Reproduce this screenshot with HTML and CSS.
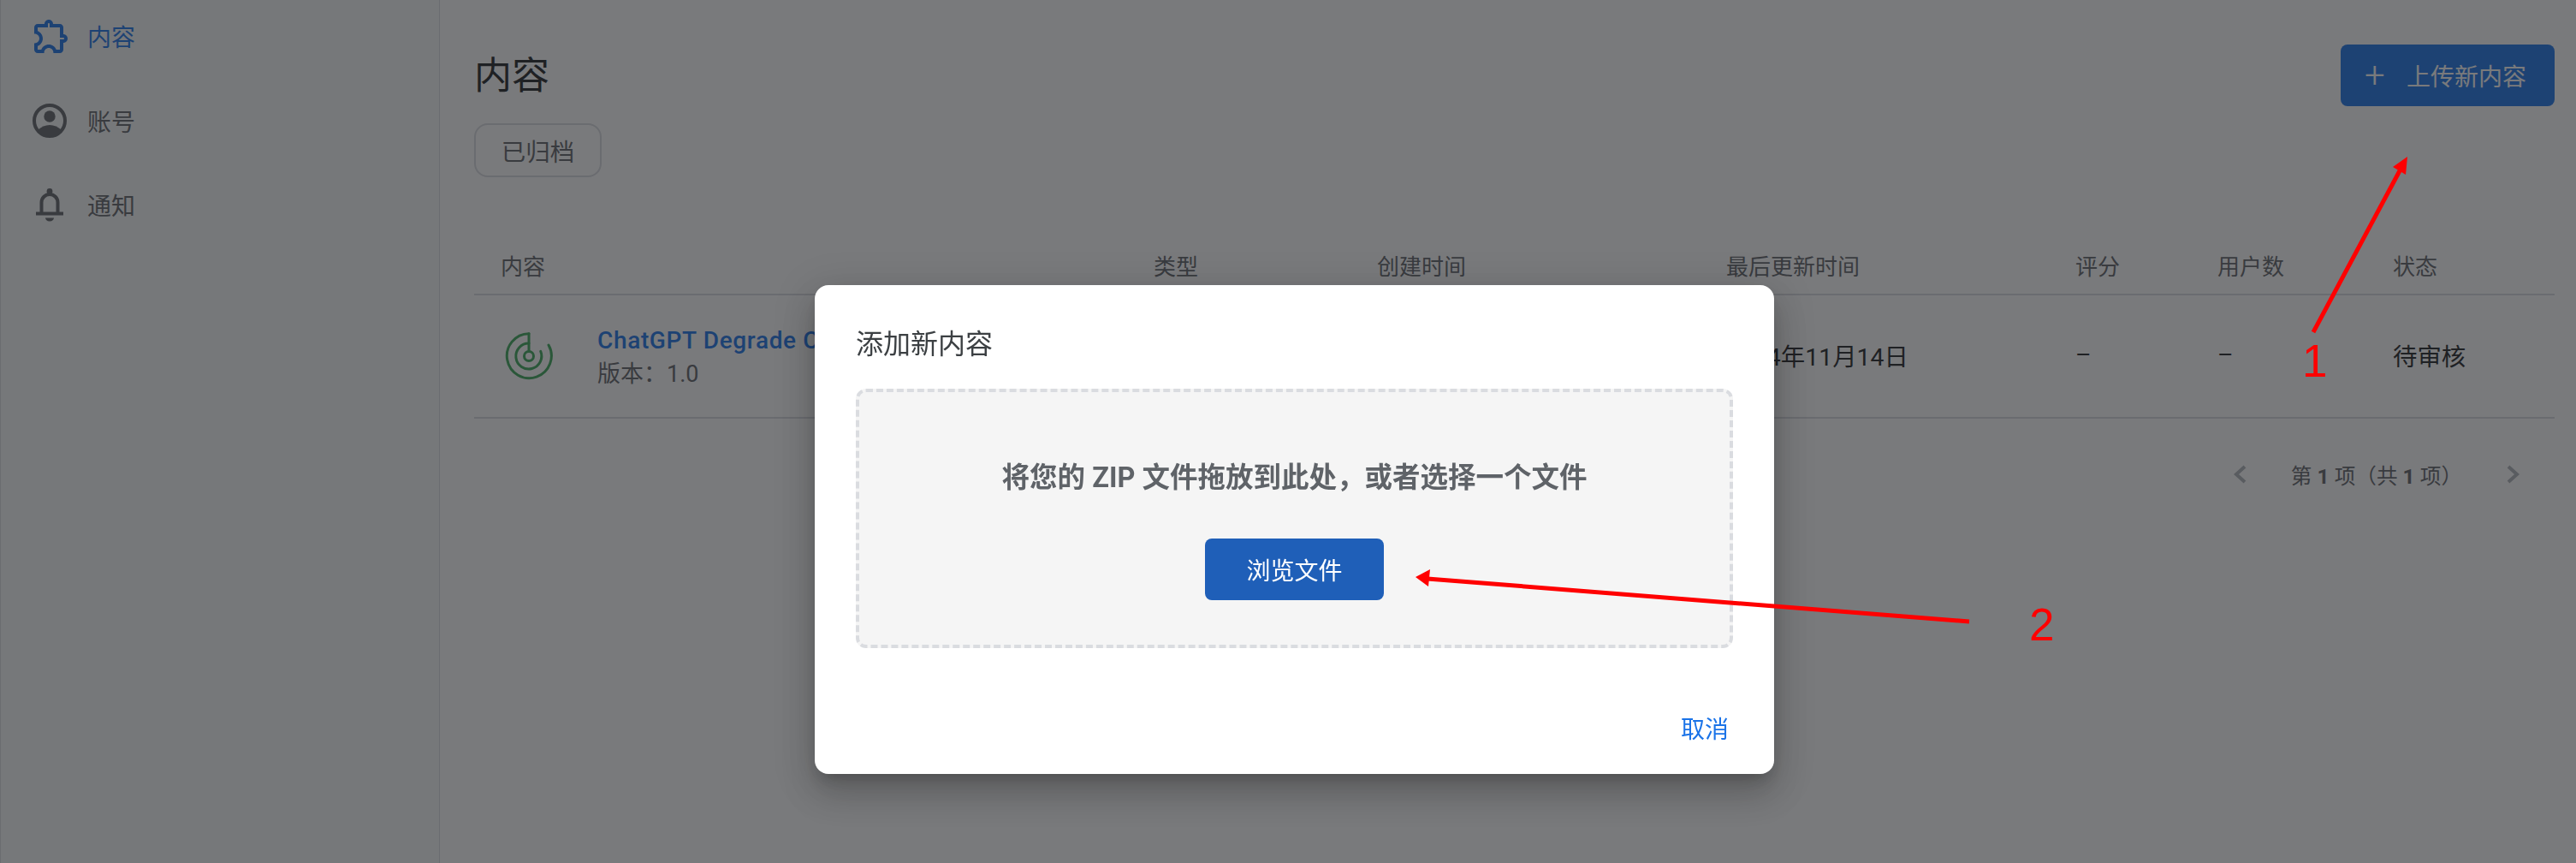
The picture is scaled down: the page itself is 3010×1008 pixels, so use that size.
FILE: index.html
```html
<!DOCTYPE html>
<html lang="zh-CN">
<head>
    <meta charset="UTF-8">
    <meta name="viewport" content="width=device-width, initial-scale=1.0">
    <title>内容</title>
    <link rel="stylesheet" href="styles.css">
</head>
<body>
    <div class="layout">
        <nav class="sidebar">
            <a class="nav-item active">
                <svg class="nav-icon" viewBox="0 0 24 24"><path fill="currentColor" d="M10.5 4.5c.28 0 .5.22.5.5v2h6v6h2c.28 0 .5.22.5.5s-.22.5-.5.5h-2v6h-2.12c-.68-1.75-2.39-3-4.38-3s-3.7 1.25-4.38 3H4v-2.12c1.75-.68 3-2.39 3-4.38 0-1.99-1.24-3.7-2.99-4.38L4 7h6V5c0-.28.22-.5.5-.5m0-2C9.12 2.5 8 3.62 8 5H4c-1.1 0-1.99.9-1.99 2v3.8h.29c1.49 0 2.7 1.21 2.7 2.7s-1.21 2.7-2.7 2.7H2V20c0 1.1.9 2 2 2h3.8v-.3c0-1.49 1.21-2.7 2.7-2.7s2.7 1.21 2.7 2.7v.3H17c1.1 0 2-.9 2-2v-4c1.38 0 2.5-1.12 2.5-2.5S20.38 11 19 11V7c0-1.1-.9-2-2-2h-4c0-1.38-1.12-2.5-2.5-2.5z"/></svg>
                <span>内容</span>
            </a>
            <a class="nav-item">
                <svg class="nav-icon" viewBox="-2 -4 48 48"><circle cx="20" cy="20" r="18" fill="none" stroke="currentColor" stroke-width="4"/><circle cx="20" cy="15" r="6.7" fill="currentColor"/><path fill="currentColor" d="M6 31C10 27 15 25 20 25C25 25 30 27 34 31A18 18 0 0 1 6 31Z"/></svg>
                <span>账号</span>
            </a>
            <a class="nav-item">
                <svg class="nav-icon" viewBox="-6 -4.5 48 48"><rect x="0" y="28" width="32" height="4" fill="currentColor"/><path fill="none" stroke="currentColor" stroke-width="4" d="M6.5 29V17a9.5 9.5 0 0 1 19 0V29"/><circle cx="16" cy="4" r="3.4" fill="currentColor"/><path fill="currentColor" d="M11 35h10c0 2-2 4-5 4s-5-2-5-4z"/></svg>
                <span>通知</span>
            </a>
        </nav>

        <main class="content">
            <div class="page-header">
                <h1>内容</h1>
                <button class="upload-btn"><span class="plus">+</span>上传新内容</button>
            </div>
            <button class="filter-btn">已归档</button>

            <table class="items">
                <colgroup>
                    <col class="col-name"><col class="col-type"><col class="col-date"><col class="col-date">
                    <col class="col-rating"><col class="col-users"><col class="col-status">
                </colgroup>
                <thead>
                    <tr>
                        <th>内容</th><th>类型</th><th>创建时间</th><th>最后更新时间</th><th>评分</th><th>用户数</th><th>状态</th>
                    </tr>
                </thead>
                <tbody>
                    <tr>
                        <td>
                            <div class="item">
                                <svg class="item-icon" viewBox="0 0 56 56" fill="none" stroke="#3ba858" stroke-width="3" stroke-linecap="round"><path d="M28 1.7A26 26 0 1 0 51 15"/><path d="M28 13A15 15 0 1 0 41.7 22.3"/><circle cx="28" cy="28" r="5.5"/><path d="M28 1.7V22"/></svg>
                                <div class="item-text">
                                    <a class="item-name">ChatGPT Degrade C</a>
                                    <div class="item-version">版本：1.0</div>
                                </div>
                            </div>
                        </td>
                        <td>扩展程序</td>
                        <td>2024年11月14日</td>
                        <td>2024年11月14日</td>
                        <td>–</td>
                        <td>–</td>
                        <td>待审核</td>
                    </tr>
                </tbody>
            </table>

            <div class="pager">
                <svg class="chevron" viewBox="0 0 16 24"><path d="M14 3L4 12L14 21"/></svg>
                <span class="pager-text">第 <b>1</b> 项（共 <b>1</b> 项）</span>
                <svg class="chevron" viewBox="0 0 16 24"><path d="M2 3L12 12L2 21"/></svg>
            </div>
        </main>
    </div>

    <div class="overlay">
        <div class="dialog">
            <h2>添加新内容</h2>
            <div class="dropzone">
                <p>将您的 ZIP 文件拖放到此处，或者选择一个文件</p>
                <button class="browse-btn">浏览文件</button>
            </div>
            <div class="dialog-actions">
                <button class="cancel-btn">取消</button>
            </div>
        </div>
    </div>

    <!-- red annotations on top of the screenshot -->
    <svg class="notes" viewBox="0 0 3010 1008">
        <path class="note-line" d="M2703 388L2808 192"/>
        <path class="note-head" d="M2813 183L2811 204L2796 195Z"/>
        <path class="note-line" d="M2301 726L1668 676"/>
        <path class="note-head" d="M1654 674L1671 665L1669 685Z"/>
        <text class="note-num" x="2690" y="440">1</text>
        <text class="note-num" x="2371" y="748">2</text>
    </svg>
</body>
</html>
```

FILE: styles.css
```css
* {
    margin: 0;
    padding: 0;
    box-sizing: border-box;
    font-family: Roboto, "Noto Sans CJK SC", sans-serif;
}
html, body {
    height: 100%;
    overflow: hidden;
    background: #fff;
}
button {
    cursor: pointer;
    font-size: 28px;
    border: none;
    background: none;
}
.layout {
    display: flex;
    height: 1008px;
}

/* sidebar */
.sidebar {
    width: 514px;
    flex-shrink: 0;
    padding-top: 17px;
    background: #f8f9fa;
    border-left: 1px solid #dadce0;
    border-right: 1px solid #dadce0;
}
.nav-item {
    display: flex;
    align-items: center;
    gap: 18px;
    height: 50px;
    margin-bottom: 48.5px;
    padding-left: 35px;
    font-size: 28px;
    color: #5f6368;
}
.nav-item.active {
    color: #1a73e8;
}
.nav-icon {
    width: 48px;
    height: 48px;
    flex-shrink: 0;
}

/* main area */
.content {
    flex: 1;
    padding: 52px 25px 0 40px;
}
.page-header {
    display: flex;
    justify-content: space-between;
    align-items: center;
    height: 72px;
}
h1 {
    padding-bottom: 6px;
    font-size: 44px;
    font-weight: 400;
    color: #202124;
}
.upload-btn {
    display: flex;
    align-items: center;
    width: 250px;
    height: 72px;
    padding-left: 28px;
    background: #1a73e8;
    color: #fff;
    border-radius: 8px;
}
.plus {
    width: 49px;
    font-size: 42px;
    font-weight: 300;
    line-height: 1;
    text-align: left;
}
.filter-btn {
    display: block;
    width: 149px;
    height: 63px;
    margin-top: 20px;
    font-size: 28.5px;
    border: 2px solid #dadce0;
    border-radius: 16px;
    color: #5f6368;
}

/* table */
.items {
    width: 2431px;
    margin-top: 80px;
    table-layout: fixed;
    border-collapse: collapse;
}
.col-name { width: 794px; }
.col-type { width: 261px; }
.col-date { width: 408px; }
.col-rating { width: 166px; }
.col-users { width: 205px; }
.col-status { width: 189px; }
th {
    height: 57px;
    padding-bottom: 11px;
    text-align: left;
    font-size: 26px;
    font-weight: 400;
    color: #5f6368;
    border-bottom: 2px solid #dadce0;
}
th:first-child {
    padding-left: 31px;
}
td {
    height: 144px;
    padding-bottom: 4px;
    font-size: 28.4px;
    color: #202124;
    border-bottom: 2px solid #dadce0;
    white-space: nowrap;
}
td:first-child {
    padding-left: 36px;
    padding-bottom: 0;
}
.item {
    display: flex;
    align-items: center;
    gap: 52px;
}
.item-icon {
    width: 56px;
    height: 56px;
    flex-shrink: 0;
}
.item-name {
    display: block;
    margin-top: 3px;
    font-size: 28px;
    font-weight: 500;
    letter-spacing: 0.65px;
    color: #1a73e8;
}
.item-version {
    margin-top: 1px;
    font-size: 27px;
    color: #5f6368;
}
.pager {
    display: flex;
    justify-content: flex-end;
    align-items: center;
    gap: 52px;
    margin-top: 47px;
    padding-right: 40px;
}
.pager-text {
    font-size: 24.6px;
    color: #5f6368;
}
.chevron {
    width: 16px;
    height: 24px;
    fill: none;
    stroke: #b0b4b9;
    stroke-width: 4;
}

/* dialog */
.overlay {
    position: fixed;
    top: 0;
    left: 0;
    right: 0;
    bottom: 0;
    background: rgba(32,33,36,0.6);
}
.dialog {
    position: absolute;
    left: 952px;
    top: 333px;
    width: 1121px;
    height: 571px;
    padding: 48px;
    background: #fff;
    border-radius: 16px;
    box-shadow: 0 11px 15px -7px rgba(0,0,0,0.2), 0 24px 38px 3px rgba(0,0,0,0.14), 0 9px 46px 8px rgba(0,0,0,0.12);
}
h2 {
    height: 36px;
    font-size: 32px;
    font-weight: 400;
    line-height: 42px;
    color: #3c4043;
}
.dropzone {
    display: flex;
    flex-direction: column;
    align-items: center;
    height: 303px;
    margin-top: 37px;
    padding-top: 78px;
    background: #f5f5f5;
    border: 4px dashed #dadce0;
    border-radius: 12px;
}
.dropzone p {
    font-size: 32.5px;
    font-weight: 700;
    line-height: 44px;
    color: #5f6368;
}
.browse-btn {
    width: 209px;
    height: 72px;
    margin-top: 49px;
    background: #1f5fb8;
    color: #fff;
    border-radius: 8px;
}
.dialog-actions {
    display: flex;
    justify-content: flex-end;
    margin-top: 76px;
    padding-right: 5px;
}
.cancel-btn {
    color: #1a73e8;
    line-height: 40px;
}

/* annotations */
.notes {
    position: fixed;
    top: 0;
    left: 0;
    width: 3010px;
    height: 1008px;
}
.note-line {
    stroke: #ff0000;
    stroke-width: 5;
    fill: none;
}
.note-head {
    fill: #ff0000;
}
.note-num {
    font-family: "Liberation Sans", sans-serif;
    font-size: 53px;
    fill: #ff0000;
}
```
